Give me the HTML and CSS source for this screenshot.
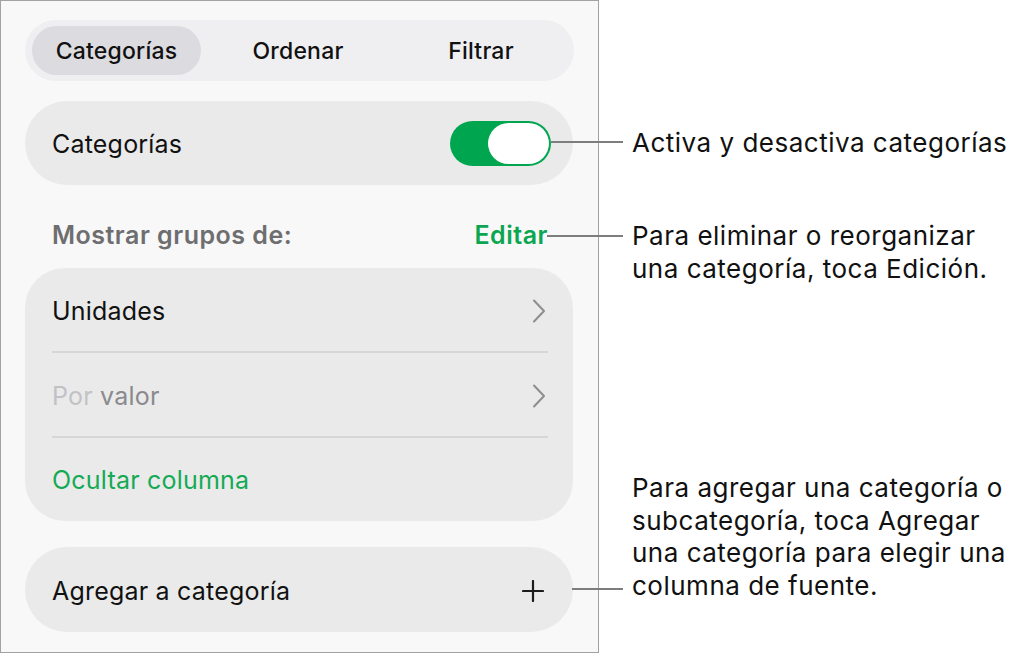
FILE: index.html
```html
<!DOCTYPE html>
<html lang="es">
<head>
<meta charset="utf-8">
<title>Categorías</title>
<link rel="stylesheet" href="styles.css">
</head>
<body>
<div class="page">
  <div class="panel">
    <div class="segmented">
      <div class="seg seg-a selected">Categorías</div>
      <div class="seg seg-b">Ordenar</div>
      <div class="seg seg-c">Filtrar</div>
    </div>

    <div class="card toggle-card">
      <span class="label">Categorías</span>
      <span class="switch"><span class="knob"></span></span>
    </div>

    <div class="section-head">
      <span class="head-label">Mostrar grupos de:</span>
      <span class="head-action">Editar</span>
    </div>

    <div class="card group">
      <div class="row">
        <span class="label">Unidades</span>
        <svg class="chev" width="14" height="24" viewBox="0 0 14 24"><path d="M2 1.5 L12 12 L2 22.5" fill="none" stroke="#8e8e92" stroke-width="2" stroke-linecap="round" stroke-linejoin="round"/></svg>
      </div>
      <div class="divider"></div>
      <div class="row">
        <span class="label"><span class="dim">Por</span> <span class="mid">valor</span></span>
        <svg class="chev" width="14" height="24" viewBox="0 0 14 24"><path d="M2 1.5 L12 12 L2 22.5" fill="none" stroke="#8e8e92" stroke-width="2" stroke-linecap="round" stroke-linejoin="round"/></svg>
      </div>
      <div class="divider"></div>
      <div class="row">
        <span class="label green">Ocultar columna</span>
      </div>
    </div>

    <div class="card add-card">
      <span class="label">Agregar a categoría</span>
      <svg class="plus" width="22" height="22" viewBox="0 0 22 22"><path d="M11 1 V21 M1 11 H21" fill="none" stroke="#1c1c1e" stroke-width="2.2" stroke-linecap="round"/></svg>
    </div>
  </div>

  <div class="callout c1">
    <span class="line"></span>
    <p class="ctext">Activa y desactiva categorías</p>
  </div>
  <div class="callout c2">
    <span class="line"></span>
    <p class="ctext">Para eliminar o reorganizar<br>una categoría, toca Edición.</p>
  </div>
  <div class="callout c3">
    <span class="line"></span>
    <p class="ctext">Para agregar una categoría o<br>subcategoría, toca Agregar<br>una categoría para elegir una<br>columna de fuente.</p>
  </div>
</div>
</body>
</html>
```

FILE: styles.css
```css
* { box-sizing: border-box; }
html, body { margin: 0; padding: 0; background: #ffffff; }
body {
  font-family: Inter, "Noto Sans", "Liberation Sans", sans-serif;
  color: #111111;
  width: 1019px;
  height: 654px;
  overflow: hidden;
}
.page { position: relative; width: 1019px; height: 654px; }

.panel {
  width: 599px;
  height: 653px;
  border: 1px solid #a2a2a2;
  background: #f8f8f8;
  padding: 19px 24px 0 24px;
  display: flex;
  flex-direction: column;
}

.segmented {
  height: 61px;
  border-radius: 31px;
  background: #efeff1;
  padding: 6px 7px;
  display: flex;
  align-items: stretch;
}
.seg {
  display: flex;
  align-items: center;
  justify-content: center;
  font-size: 23px;
  font-weight: 500;
  letter-spacing: 0.2px;
  color: #111111;
  border-radius: 25px;
  padding-top: 1px;
}
.seg-a { width: 169px; }
.seg-b { width: 194px; }
.seg-c { flex: 1; }
.seg.selected { background: #dcdce0; }

.card {
  background: #eaeaea;
  width: 548px;
}
.label { font-size: 25px; letter-spacing: 0.2px; color: #111111; }

.toggle-card {
  margin-top: 20px;
  height: 84px;
  border-radius: 42px;
  display: flex;
  align-items: center;
  justify-content: space-between;
  padding: 1px 22px 0 27px;
}
.switch {
  width: 101px;
  height: 45px;
  border-radius: 23px;
  background: #00a64f;
  display: flex;
  align-items: center;
  justify-content: flex-end;
  padding-right: 2px;
}
.knob {
  width: 61px;
  height: 41px;
  border-radius: 21px;
  background: #ffffff;
}

.section-head {
  height: 83px;
  display: flex;
  align-items: center;
  justify-content: space-between;
  padding: 16px 26px 0 27px;
}
.head-label { font-size: 25px; font-weight: 600; color: #6e6e70; letter-spacing: 0.5px; }
.head-action { font-size: 25px; font-weight: 600; color: #0ba651; letter-spacing: 0.5px; }

.group {
  height: 253px;
  border-radius: 40px;
  display: flex;
  flex-direction: column;
}
.row {
  height: 84px;
  display: flex;
  align-items: center;
  justify-content: space-between;
  padding: 2px 27px 0 27px;
}
.row:nth-child(3) { height: 83px; }
.divider {
  height: 2px;
  background: #d6d6d8;
  margin: 0 25px 0 27px;
}
.dim { color: #c2c2c6; }
.mid { color: #8a8a8e; }
.green { color: #14aa55; }

.add-card {
  margin-top: 26px;
  height: 85px;
  border-radius: 42px;
  display: flex;
  align-items: center;
  justify-content: space-between;
  padding: 2px 29px 0 27px;
}

.callout { position: absolute; left: 0; top: 0; }
.line {
  position: absolute;
  height: 2px;
  background: #7d7d7d;
}
.ctext {
  margin: 0;
  position: absolute;
  left: 632px;
  font-size: 26px;
  line-height: 32.5px;
  color: #111111;
  white-space: nowrap;
  letter-spacing: 0.5px;
}
.c1 .line { left: 551px; width: 72px; top: 141px; }
.c1 .ctext { top: 127px; }
.c2 .line { left: 547px; width: 76px; top: 235px; }
.c2 .ctext { top: 220px; }
.c3 .line { left: 572px; width: 51px; top: 588px; }
.c3 .ctext { top: 472px; }
```
